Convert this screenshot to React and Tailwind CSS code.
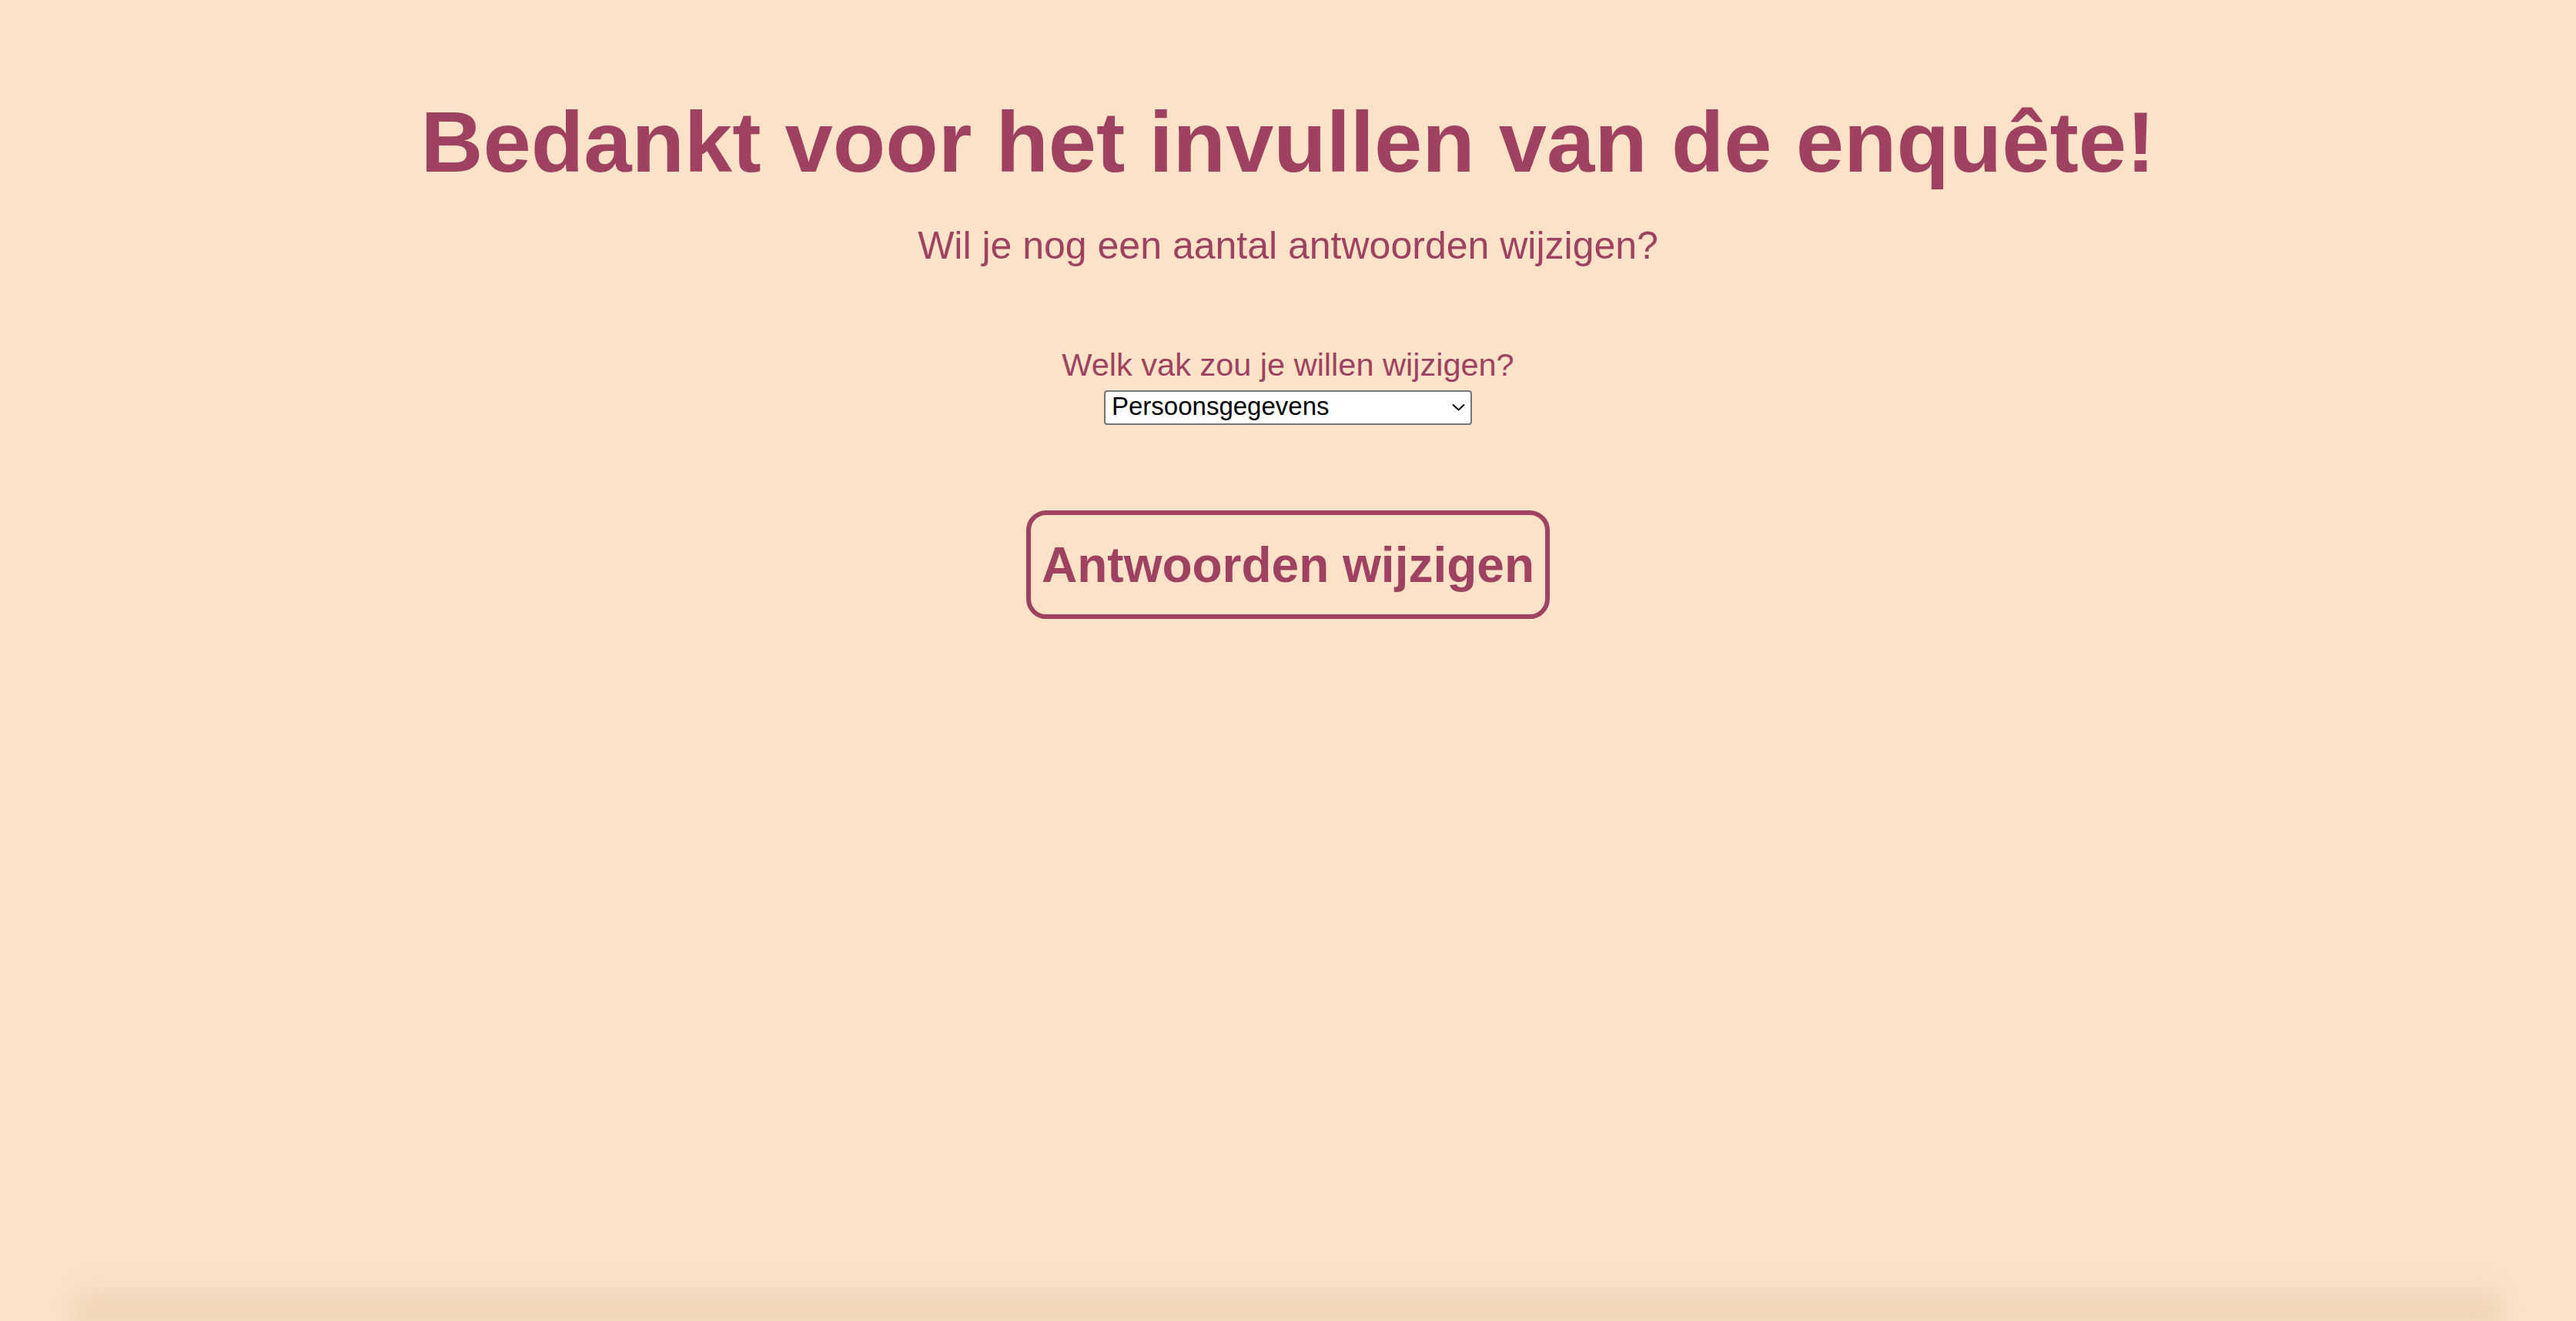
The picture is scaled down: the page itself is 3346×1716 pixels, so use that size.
import React, { useState } from 'react';

const vakken = ['Persoonsgegevens', 'Opleiding', 'Werkervaring', 'Interesses'];

const App = () => {
  const [vak, setVak] = useState(vakken[0]);

  return (
    <div className="h-screen overflow-hidden bg-[#fce3c7] flex flex-col font-['Liberation_Sans',Arial,sans-serif] text-[#9f4160]">
      <main className="flex-1 flex flex-col items-center pt-[121px] text-center">
        <h1 className="text-[112px] leading-[1.15] font-bold">Bedankt voor het invullen van de enquête!</h1>
        <p className="mt-[41px] text-[50px] leading-[1.15]">Wil je nog een aantal antwoorden wijzigen?</p>

        <label htmlFor="vak" className="mt-[102px] text-[41.5px] leading-[1.15]">Welk vak zou je willen wijzigen?</label>
        <div className="relative mt-[9px] w-[478px] h-[45px]">
          <select
            id="vak"
            value={vak}
            onChange={e => setVak(e.target.value)}
            className="appearance-none w-full h-full bg-white text-black text-[33px] leading-[38px] pt-0 pb-[4px] pl-[8px] border-[2px] border-[#767676] rounded-[4px] outline-none"
          >
            {vakken.map(v => <option key={v} value={v}>{v}</option>)}
          </select>
          {/* pijltje van de select */}
          <svg className="absolute right-[9px] top-[17px] pointer-events-none" width="17" height="10" viewBox="0 0 17 10" fill="none">
            <path d="M1 1.5 L8.5 8.5 L16 1.5" stroke="#000" strokeWidth="2" />
          </svg>
        </div>

        <button className="mt-[111px] w-[680px] h-[141px] border-[6px] border-[#9f4160] rounded-[26px] text-[64px] font-bold leading-none">
          Antwoorden wijzigen
        </button>
      </main>

      {/* schaduw onderaan */}
      <div className="h-[64px] px-[95px]">
        <div className="h-full bg-gradient-to-b from-transparent via-[#f6dcc0] to-[#e2c7a7] blur-[16px]" />
      </div>
    </div>
  );
};

export default App;
